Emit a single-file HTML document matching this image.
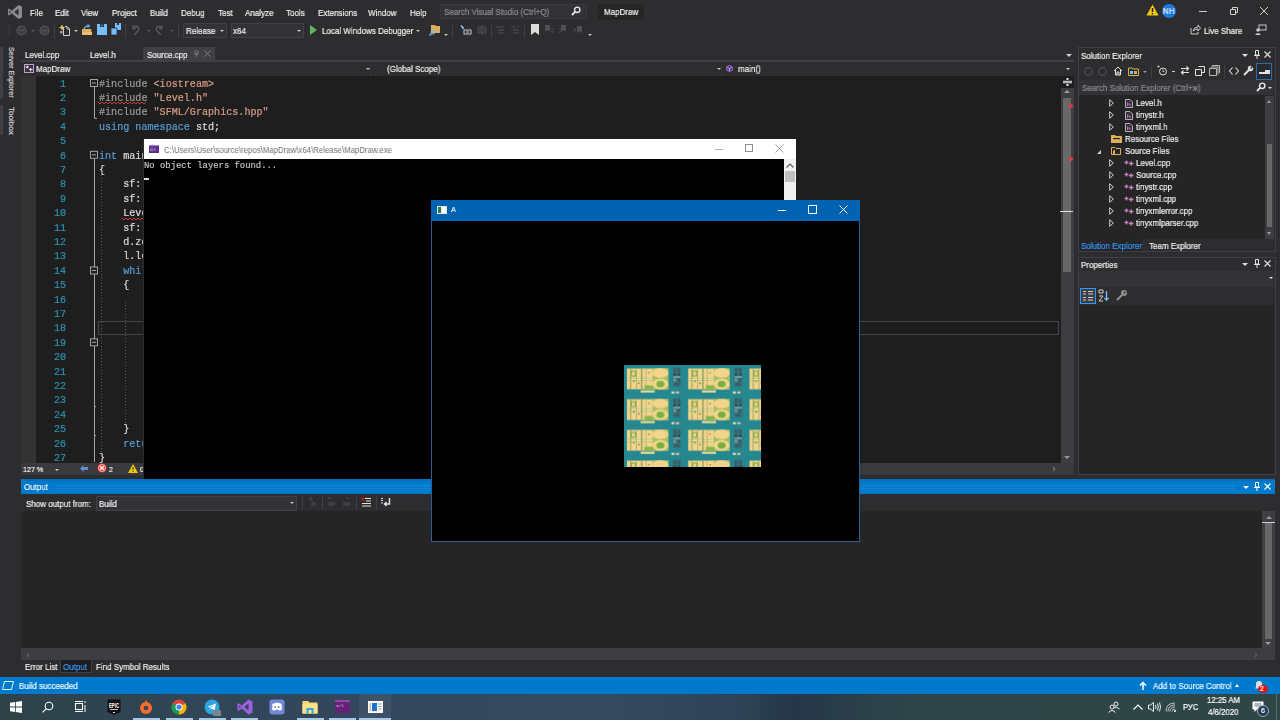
<!DOCTYPE html>
<html><head><meta charset="utf-8">
<style>
*{margin:0;padding:0;box-sizing:border-box}
html,body{width:1280px;height:720px;overflow:hidden;background:#2d2d30;font-family:"Liberation Sans",sans-serif;color:#f1f1f1}
.a{position:absolute}
.t{position:absolute;white-space:nowrap;font-size:9px;line-height:10px;color:#f1f1f1;transform-origin:0 50%;transform:scaleX(.89)}
.mono{font-family:"Liberation Mono",monospace}
body{-webkit-font-smoothing:antialiased}
.t,.mono{will-change:transform}
.t{-webkit-text-stroke:0.2px}
.mono{-webkit-text-stroke:0.2px}
</style></head><body>
<!-- MENU BAR -->
<div class="a" style="left:0;top:0;width:1280px;height:47px;background:#2d2d30"></div>
<svg class="a" style="left:7px;top:4px" width="16" height="16" viewBox="0 0 16 16"><path d="M11.5 1 L15 2.6 V13.4 L11.5 15 L4.8 9.2 L2 11.4 L1 10.8 V5.2 L2 4.6 L4.8 6.8 Z M11.5 4.6 L7.2 8 L11.5 11.4 Z M2.2 6.6 V9.4 L3.9 8 Z" fill="#8b8b8f" fill-rule="evenodd"/></svg>
<div class="t" style="left:30px;top:7.5px">File</div>
<div class="t" style="left:55px;top:7.5px">Edit</div>
<div class="t" style="left:81px;top:7.5px">View</div>
<div class="t" style="left:112px;top:7.5px">Project</div>
<div class="t" style="left:150px;top:7.5px">Build</div>
<div class="t" style="left:181px;top:7.5px">Debug</div>
<div class="t" style="left:218px;top:7.5px">Test</div>
<div class="t" style="left:245px;top:7.5px">Analyze</div>
<div class="t" style="left:286px;top:7.5px">Tools</div>
<div class="t" style="left:318px;top:7.5px">Extensions</div>
<div class="t" style="left:368px;top:7.5px">Window</div>
<div class="t" style="left:410px;top:7.5px">Help</div>
<div class="a" style="left:440px;top:4px;width:147px;height:15px;background:#333337;border:1px solid #3a3a3e"></div>
<div class="t" style="left:444px;top:6.5px;color:#8e8e8e">Search Visual Studio (Ctrl+Q)</div>
<svg class="a" style="left:571px;top:6px" width="10" height="10" viewBox="0 0 10 10"><circle cx="6.2" cy="3.8" r="2.7" fill="none" stroke="#e8e8e8" stroke-width="1.4"/><path d="M4.3 5.7 L1 9" stroke="#e8e8e8" stroke-width="1.8"/></svg>
<div class="a" style="left:598px;top:4px;width:46px;height:16px;background:#252526"></div>
<div class="t" style="left:604px;top:6.5px">MapDraw</div>
<!-- right title controls -->
<svg class="a" style="left:1146px;top:4px" width="13" height="12" viewBox="0 0 13 12"><path d="M6.5 0.5 L12.5 11.5 H0.5 Z" fill="#f2c811"/><path d="M6.5 4 V8" stroke="#1e1e1e" stroke-width="1.4"/><rect x="5.8" y="9" width="1.4" height="1.4" fill="#1e1e1e"/></svg>
<div class="a" style="left:1162px;top:4px;width:14px;height:14px;border-radius:50%;background:#1a7ae0"></div>
<div class="t" style="left:1163px;top:6px;font-size:8.5px;letter-spacing:0.6px">NH</div>
<div class="a" style="left:1199px;top:11px;width:8px;height:1px;background:#d0d0d0"></div>
<svg class="a" style="left:1229px;top:6px" width="10" height="10" viewBox="0 0 10 10"><path d="M1.5 3.5 H6.5 V8.5 H1.5 Z M3.5 3.5 V1.5 H8.5 V6.5 H6.5" fill="none" stroke="#d0d0d0" stroke-width="1"/></svg>
<svg class="a" style="left:1259px;top:6px" width="10" height="10" viewBox="0 0 10 10"><path d="M1 1 L9 9 M9 1 L1 9" stroke="#d0d0d0" stroke-width="1"/></svg>

<!-- TOOLBAR -->
<div class="a" style="left:8px;top:24px;width:2px;height:13px;background-image:linear-gradient(#3a3a3e 50%,transparent 50%);background-size:2px 2px"></div>
<svg class="a" style="left:16px;top:25px" width="11" height="11" viewBox="0 0 11 11"><circle cx="5.5" cy="5.5" r="4.5" fill="#3e3e42" stroke="#55555a" stroke-width="1.2"/><path d="M3 5.5 H8" fill="none" stroke="#55555a" stroke-width="1.4"/></svg>
<div class="a" style="left:31px;top:30px;width:0;height:0;border-left:2px solid transparent;border-right:2px solid transparent;border-top:2px solid #5a5a5e"></div>
<svg class="a" style="left:39px;top:25px" width="11" height="11" viewBox="0 0 11 11"><circle cx="5.5" cy="5.5" r="4.5" fill="#3e3e42" stroke="#55555a" stroke-width="1.2"/><path d="M3 5.5 H8" fill="none" stroke="#55555a" stroke-width="1.4"/></svg>
<div class="a" style="left:54px;top:24px;width:1px;height:14px;background:#3f3f46"></div>
<svg class="a" style="left:59px;top:24px" width="12" height="12" viewBox="0 0 12 12"><path d="M4.5 3.5 V11.5 H10.5 V5 L8 2.5 H6" fill="none" stroke="#d0d0d0" stroke-width="1"/><path d="M8 2.5 V5 H10.5" fill="none" stroke="#d0d0d0" stroke-width="0.8"/><path d="M3 0.5 L4 2.5 L6 3.5 L4 4.5 L3 6.5 L2 4.5 L0 3.5 L2 2.5 Z" fill="#e0c060"/><rect x="1" y="7" width="2.5" height="2.5" fill="#a0a0a0"/></svg>
<div class="a" style="left:74px;top:30px;width:0;height:0;border-left:2px solid transparent;border-right:2px solid transparent;border-top:2px solid #c8c8c8"></div>
<svg class="a" style="left:81px;top:24px" width="12" height="12" viewBox="0 0 12 12"><path d="M1 5 H10 L11 11 H1 Z" fill="#dcb05a"/><path d="M1 8 H11 V11 H1Z" fill="#e8c070"/><path d="M3 5 Q4 1.5 8 2 M6.5 0.5 L8.5 2 L6.5 3.5" fill="none" stroke="#60a8e8" stroke-width="1.2"/></svg>
<svg class="a" style="left:97px;top:24px" width="10" height="11" viewBox="0 0 10 11"><path d="M0 0 H10 V11 H0 Z" fill="#75beff"/><path d="M3 0 H7 V3 H3Z" fill="#2d2d30"/><rect x="4.5" y="0.5" width="1" height="2" fill="#75beff"/></svg>
<svg class="a" style="left:111px;top:23px" width="10" height="12" viewBox="0 0 10 12"><path d="M4 0 H10 V7 H4Z" fill="#75beff"/><path d="M0 5 H6 V12 H0Z" fill="#75beff" stroke="#2d2d30" stroke-width="0.8"/><rect x="6" y="0" width="2" height="2" fill="#2d2d30"/></svg>
<div class="a" style="left:125px;top:24px;width:1px;height:14px;background:#3f3f46"></div>
<svg class="a" style="left:131px;top:25px" width="10" height="11" viewBox="0 0 10 11"><path d="M3 10 L7 6 Q9 3 6 1.5 Q3.5 0.5 2 3 M2 0.5 V3.5 H5" fill="none" stroke="#5a5a5e" stroke-width="1.4"/></svg>
<div class="a" style="left:147px;top:30px;width:0;height:0;border-left:2px solid transparent;border-right:2px solid transparent;border-top:2px solid #5a5a5e"></div>
<svg class="a" style="left:154px;top:25px" width="10" height="11" viewBox="0 0 10 11"><path d="M7 10 L3 6 Q1 3 4 1.5 Q6.5 0.5 8 3 M8 0.5 V3.5 H5" fill="none" stroke="#5a5a5e" stroke-width="1.4"/></svg>
<div class="a" style="left:170px;top:30px;width:0;height:0;border-left:2px solid transparent;border-right:2px solid transparent;border-top:2px solid #5a5a5e"></div>
<div class="a" style="left:178px;top:24px;width:1px;height:14px;background:#3f3f46"></div>
<div class="a" style="left:183px;top:23px;width:44px;height:15px;background:#333337;border:1px solid #3f3f46"></div>
<div class="t" style="left:186px;top:26px">Release</div>
<div class="a" style="left:220px;top:30px;width:0;height:0;border-left:2.5px solid transparent;border-right:2.5px solid transparent;border-top:2.5px solid #c8c8c8"></div>
<div class="a" style="left:231px;top:23px;width:73px;height:15px;background:#333337;border:1px solid #3f3f46"></div>
<div class="t" style="left:233px;top:26px">x64</div>
<div class="a" style="left:297px;top:30px;width:0;height:0;border-left:2.5px solid transparent;border-right:2.5px solid transparent;border-top:2.5px solid #c8c8c8"></div>
<div class="a" style="left:310px;top:25px;width:0;height:0;border-top:5px solid transparent;border-bottom:5px solid transparent;border-left:7px solid #5fb85f"></div>
<div class="t" style="left:322px;top:26px">Local Windows Debugger</div>
<div class="a" style="left:416px;top:30px;width:0;height:0;border-left:2.5px solid transparent;border-right:2.5px solid transparent;border-top:2.5px solid #c8c8c8"></div>
<svg class="a" style="left:429px;top:24px" width="12" height="12" viewBox="0 0 12 12"><path d="M2 1 H6 L7 2 H11 V9 H2Z" fill="#dcb05a"/><circle cx="4" cy="8" r="2" fill="none" stroke="#75beff" stroke-width="1"/><path d="M2.5 9.5 L0.5 11.5" stroke="#75beff" stroke-width="1.2"/></svg>
<div class="a" style="left:444px;top:34px;width:0;height:0;border-left:2px solid transparent;border-right:2px solid transparent;border-top:2px solid #c8c8c8"></div>
<div class="a" style="left:452px;top:24px;width:1px;height:14px;background:#3f3f46"></div>
<svg class="a" style="left:460px;top:24px" width="12" height="12" viewBox="0 0 12 12"><rect x="4" y="6" width="7" height="4" fill="none" stroke="#c8c8c8" stroke-width="1"/><path d="M1 1 L4 4 L2.5 4.5Z" fill="#75beff" stroke="#75beff"/><path d="M6 8 H9" stroke="#c8c8c8"/></svg>
<svg class="a" style="left:476px;top:24px" width="12" height="12" viewBox="0 0 12 12"><path d="M6 1 V11 M2 3 H10 V9 H2Z M3 5 H5 M7 5 H9 M3 7 H5 M7 7 H9" fill="none" stroke="#505054" stroke-width="1"/></svg>
<div class="a" style="left:491px;top:24px;width:1px;height:14px;background:#3f3f46"></div>
<svg class="a" style="left:495px;top:25px" width="10" height="10" viewBox="0 0 10 10"><path d="M1 2 H9 M3 5 H9 M3 8 H9" stroke="#505054" stroke-width="1.2"/></svg>
<svg class="a" style="left:510px;top:25px" width="10" height="10" viewBox="0 0 10 10"><path d="M1 2 H6 M3 5 H9 M3 8 H9 M8 1 L9 2" stroke="#505054" stroke-width="1.2"/></svg>
<div class="a" style="left:524px;top:24px;width:1px;height:14px;background:#3f3f46"></div>
<svg class="a" style="left:531px;top:24px" width="8" height="11" viewBox="0 0 8 11"><path d="M0 0 H8 V11 L4 8 L0 11Z" fill="#dcdcdc"/></svg>
<svg class="a" style="left:545px;top:25px" width="9" height="10" viewBox="0 0 9 10"><path d="M0 0 H5 V7 L2.5 5 L0 7Z" fill="#505054"/><path d="M6 4 H9 M6 7 H9" stroke="#505054"/></svg>
<svg class="a" style="left:559px;top:25px" width="9" height="10" viewBox="0 0 9 10"><path d="M2 0 H7 V7 L4.5 5 L2 7Z" fill="#505054"/><path d="M0 4 H2 M0 7 H2" stroke="#505054"/></svg>
<svg class="a" style="left:573px;top:25px" width="10" height="10" viewBox="0 0 10 10"><path d="M4 1 H9 V8 L6.5 6 L4 8Z" fill="#505054"/><path d="M0 3 L3 5 L0 7" fill="none" stroke="#505054"/></svg>
<div class="a" style="left:588px;top:34px;width:0;height:0;border-left:2px solid transparent;border-right:2px solid transparent;border-top:2px solid #c8c8c8"></div>
<svg class="a" style="left:1190px;top:24px" width="11" height="11" viewBox="0 0 11 11"><path d="M1 4 V10 H8 V8 M3 7 Q4 3 8 3 V1 L10.5 4 L8 7 V5 Q5 5 3 7" fill="none" stroke="#c8c8c8" stroke-width="1"/></svg>
<div class="t" style="left:1204px;top:26px">Live Share</div>
<svg class="a" style="left:1255px;top:24px" width="12" height="12" viewBox="0 0 12 12"><rect x="4" y="1" width="7" height="5" fill="none" stroke="#c8c8c8"/><circle cx="3" cy="6" r="1.8" fill="#c8c8c8"/><path d="M0 11 Q3 7 6 11Z" fill="#c8c8c8"/></svg>

<!-- LEFT STRIP -->
<div class="a" style="left:0;top:47px;width:3px;height:52px;background:#3f3f46"></div>
<div class="a" style="left:0;top:105px;width:3px;height:30px;background:#3f3f46"></div>
<div class="t" style="left:3px;top:47px;transform-origin:0 0;transform:translate(12.5px,0) rotate(90deg);will-change:auto;font-size:7.3px;color:#d0d0d0">Server Explorer</div>
<div class="t" style="left:3px;top:106.5px;transform-origin:0 0;transform:translate(12.5px,0) rotate(90deg);will-change:auto;font-size:8.1px;color:#d0d0d0">Toolbox</div>
<!-- TABS -->
<div class="t" style="left:25px;top:50px">Level.cpp</div>
<div class="t" style="left:90px;top:50px">Level.h</div>
<div class="a" style="left:143px;top:47px;width:72px;height:14px;background:#3f3f46"></div>
<div class="t" style="left:147px;top:50px">Source.cpp</div>
<svg class="a" style="left:193px;top:50px" width="7" height="7" viewBox="0 0 7 7"><path d="M2 1 H5 V4 H2Z M1 4 H6 M3.5 4 V7" fill="none" stroke="#808080" stroke-width="0.8"/></svg>
<svg class="a" style="left:204px;top:50px" width="7" height="7" viewBox="0 0 7 7"><path d="M0.5 0.5 L6.5 6.5 M6.5 0.5 L0.5 6.5" stroke="#808080" stroke-width="1"/></svg>
<div class="a" style="left:21px;top:60px;width:1053px;height:2px;background:#3f3f46"></div>
<div class="a" style="left:1066px;top:54px;width:0;height:0;border-left:3px solid transparent;border-right:3px solid transparent;border-top:3px solid #d0d0d0"></div>
<!-- NAV BAR -->
<div class="a" style="left:21px;top:62px;width:1053px;height:14px;background:#2d2d30"></div>
<svg class="a" style="left:24px;top:64px" width="10" height="9" viewBox="0 0 10 9"><rect x="0.5" y="0.5" width="9" height="8" fill="#3a2e40" stroke="#c0a0d0"/><path d="M1.5 3 H5 M3.2 1.5 V4.5 M5 5.5 H8.5 M6.7 4 V7.5" stroke="#f0f0f0" fill="none" stroke-width="1"/></svg>
<div class="t" style="left:36px;top:64px">MapDraw</div>
<div class="a" style="left:366px;top:68px;width:0;height:0;border-left:2px solid transparent;border-right:2px solid transparent;border-top:2px solid #c8c8c8"></div>
<div class="a" style="left:370px;top:62px;width:1px;height:14px;background:#38383c"></div>
<div class="t" style="left:387px;top:64px">(Global Scope)</div>
<div class="a" style="left:717px;top:68px;width:0;height:0;border-left:2px solid transparent;border-right:2px solid transparent;border-top:2px solid #c8c8c8"></div>
<div class="a" style="left:721px;top:62px;width:1px;height:14px;background:#38383c"></div>
<svg class="a" style="left:726px;top:64.5px" width="7" height="7" viewBox="0 0 7 7"><path d="M3.5 0.3 L6.7 2 V5 L3.5 6.7 L0.3 5 V2Z" fill="#5a2d8a" stroke="#b180d7" stroke-width="0.8"/><path d="M1.5 2.5 L3.5 3.5 L5.5 2.5 M3.5 3.5 V6" fill="none" stroke="#d8c0f0" stroke-width="0.8"/></svg>
<div class="t" style="left:738px;top:64px">main()</div>
<div class="a" style="left:1066px;top:68px;width:0;height:0;border-left:2px solid transparent;border-right:2px solid transparent;border-top:2px solid #c8c8c8"></div>
<!-- EDITOR -->
<div class="a" style="left:21px;top:76px;width:15px;height:387px;background:#333333"></div>
<div class="a" style="left:36px;top:76px;width:1025px;height:387px;background:#1e1e1e"></div>
<div class="a" style="left:98px;top:321px;width:961px;height:14px;border:1px solid #46464a"></div>
<div class="a mono" style="left:36px;top:77.5px;width:30px;text-align:right;font-size:10.1px;line-height:14px;color:#2b91af">1</div>
<div class="a mono" style="left:36px;top:91.9px;width:30px;text-align:right;font-size:10.1px;line-height:14px;color:#2b91af">2</div>
<div class="a mono" style="left:36px;top:106.3px;width:30px;text-align:right;font-size:10.1px;line-height:14px;color:#2b91af">3</div>
<div class="a mono" style="left:36px;top:120.7px;width:30px;text-align:right;font-size:10.1px;line-height:14px;color:#2b91af">4</div>
<div class="a mono" style="left:36px;top:135.1px;width:30px;text-align:right;font-size:10.1px;line-height:14px;color:#2b91af">5</div>
<div class="a mono" style="left:36px;top:149.5px;width:30px;text-align:right;font-size:10.1px;line-height:14px;color:#2b91af">6</div>
<div class="a mono" style="left:36px;top:163.9px;width:30px;text-align:right;font-size:10.1px;line-height:14px;color:#2b91af">7</div>
<div class="a mono" style="left:36px;top:178.3px;width:30px;text-align:right;font-size:10.1px;line-height:14px;color:#2b91af">8</div>
<div class="a mono" style="left:36px;top:192.7px;width:30px;text-align:right;font-size:10.1px;line-height:14px;color:#2b91af">9</div>
<div class="a mono" style="left:36px;top:207.1px;width:30px;text-align:right;font-size:10.1px;line-height:14px;color:#2b91af">10</div>
<div class="a mono" style="left:36px;top:221.5px;width:30px;text-align:right;font-size:10.1px;line-height:14px;color:#2b91af">11</div>
<div class="a mono" style="left:36px;top:235.9px;width:30px;text-align:right;font-size:10.1px;line-height:14px;color:#2b91af">12</div>
<div class="a mono" style="left:36px;top:250.3px;width:30px;text-align:right;font-size:10.1px;line-height:14px;color:#2b91af">13</div>
<div class="a mono" style="left:36px;top:264.7px;width:30px;text-align:right;font-size:10.1px;line-height:14px;color:#2b91af">14</div>
<div class="a mono" style="left:36px;top:279.1px;width:30px;text-align:right;font-size:10.1px;line-height:14px;color:#2b91af">15</div>
<div class="a mono" style="left:36px;top:293.5px;width:30px;text-align:right;font-size:10.1px;line-height:14px;color:#2b91af">16</div>
<div class="a mono" style="left:36px;top:307.9px;width:30px;text-align:right;font-size:10.1px;line-height:14px;color:#2b91af">17</div>
<div class="a mono" style="left:36px;top:322.3px;width:30px;text-align:right;font-size:10.1px;line-height:14px;color:#2b91af">18</div>
<div class="a mono" style="left:36px;top:336.7px;width:30px;text-align:right;font-size:10.1px;line-height:14px;color:#2b91af">19</div>
<div class="a mono" style="left:36px;top:351.1px;width:30px;text-align:right;font-size:10.1px;line-height:14px;color:#2b91af">20</div>
<div class="a mono" style="left:36px;top:365.5px;width:30px;text-align:right;font-size:10.1px;line-height:14px;color:#2b91af">21</div>
<div class="a mono" style="left:36px;top:379.9px;width:30px;text-align:right;font-size:10.1px;line-height:14px;color:#2b91af">22</div>
<div class="a mono" style="left:36px;top:394.3px;width:30px;text-align:right;font-size:10.1px;line-height:14px;color:#2b91af">23</div>
<div class="a mono" style="left:36px;top:408.7px;width:30px;text-align:right;font-size:10.1px;line-height:14px;color:#2b91af">24</div>
<div class="a mono" style="left:36px;top:423.1px;width:30px;text-align:right;font-size:10.1px;line-height:14px;color:#2b91af">25</div>
<div class="a mono" style="left:36px;top:437.5px;width:30px;text-align:right;font-size:10.1px;line-height:14px;color:#2b91af">26</div>
<div class="a mono" style="left:36px;top:451.9px;width:30px;text-align:right;font-size:10.1px;line-height:14px;color:#2b91af">27</div>
<div class="a mono" style="left:98.5px;top:77.5px;white-space:pre;font-size:10.1px;line-height:14px;color:#dcdcdc"><span style="color:#9b9b9b">#include</span> <span style="color:#d69d85">&lt;iostream&gt;</span></div>
<div class="a mono" style="left:98.5px;top:91.9px;white-space:pre;font-size:10.1px;line-height:14px;color:#dcdcdc"><span style="color:#9b9b9b">#include</span> <span style="color:#d69d85">"Level.h"</span></div>
<div class="a mono" style="left:98.5px;top:106.3px;white-space:pre;font-size:10.1px;line-height:14px;color:#dcdcdc"><span style="color:#9b9b9b">#include</span> <span style="color:#d69d85">"SFML/Graphics.hpp"</span></div>
<div class="a mono" style="left:98.5px;top:120.7px;white-space:pre;font-size:10.1px;line-height:14px;color:#dcdcdc"><span style="color:#569cd6">using</span> <span style="color:#569cd6">namespace</span> std;</div>
<div class="a mono" style="left:98.5px;top:149.5px;white-space:pre;font-size:10.1px;line-height:14px;color:#dcdcdc"><span style="color:#569cd6">int</span> main()</div>
<div class="a mono" style="left:98.5px;top:163.9px;white-space:pre;font-size:10.1px;line-height:14px;color:#dcdcdc">{</div>
<div class="a mono" style="left:98.5px;top:178.3px;white-space:pre;font-size:10.1px;line-height:14px;color:#dcdcdc">    sf::RenderWindow</div>
<div class="a mono" style="left:98.5px;top:192.7px;white-space:pre;font-size:10.1px;line-height:14px;color:#dcdcdc">    sf::View</div>
<div class="a mono" style="left:98.5px;top:207.1px;white-space:pre;font-size:10.1px;line-height:14px;color:#dcdcdc">    Level</div>
<div class="a mono" style="left:98.5px;top:221.5px;white-space:pre;font-size:10.1px;line-height:14px;color:#dcdcdc">    sf::Texture</div>
<div class="a mono" style="left:98.5px;top:235.9px;white-space:pre;font-size:10.1px;line-height:14px;color:#dcdcdc">    d.zoom</div>
<div class="a mono" style="left:98.5px;top:250.3px;white-space:pre;font-size:10.1px;line-height:14px;color:#dcdcdc">    l.load</div>
<div class="a mono" style="left:98.5px;top:264.7px;white-space:pre;font-size:10.1px;line-height:14px;color:#dcdcdc">    <span style="color:#569cd6">while</span></div>
<div class="a mono" style="left:98.5px;top:279.1px;white-space:pre;font-size:10.1px;line-height:14px;color:#dcdcdc">    {</div>
<div class="a mono" style="left:98.5px;top:423.1px;white-space:pre;font-size:10.1px;line-height:14px;color:#dcdcdc">    }</div>
<div class="a mono" style="left:98.5px;top:437.5px;white-space:pre;font-size:10.1px;line-height:14px;color:#dcdcdc">    <span style="color:#569cd6">return</span></div>
<div class="a mono" style="left:98.5px;top:451.9px;white-space:pre;font-size:10.1px;line-height:14px;color:#dcdcdc">}</div>

<!-- outlining -->
<svg class="a" style="left:88px;top:77px" width="12" height="386" viewBox="0 0 12 387">
<g fill="none" stroke="#a5a5a5" stroke-width="1">
<rect x="2.5" y="2.5" width="7" height="7" fill="#1e1e1e"/><path d="M4 6 H8"/>
<path d="M6.5 10 V41.5 H9"/>
<rect x="2.5" y="74.5" width="7" height="7" fill="#1e1e1e"/><path d="M4 78 H8"/>
<path d="M6.5 82 V386"/>
<rect x="2.5" y="190.5" width="7" height="7" fill="#1e1e1e"/><path d="M4 194 H8"/>
<rect x="2.5" y="262.5" width="7" height="7" fill="#1e1e1e"/><path d="M4 266 H8"/>
<path d="M6.5 330.5 H8 M6.5 359.5 H8"/>
</g></svg>
<div class="a" style="left:101px;top:172px;width:1px;height:281px;background-image:linear-gradient(#5a5a5a 50%,transparent 50%);background-size:1px 3px"></div>
<div class="a" style="left:125px;top:302px;width:1px;height:122px;background-image:linear-gradient(#5a5a5a 50%,transparent 50%);background-size:1px 3px"></div>
<svg class="a" style="left:98px;top:101px" width="48" height="4" viewBox="0 0 48 4"><path d="M0 1 L2 3 L4 1 L6 3 L8 1 L10 3 L12 1 L14 3 L16 1 L18 3 L20 1 L22 3 L24 1 L26 3 L28 1 L30 3 L32 1 L34 3 L36 1 L38 3 L40 1 L42 3 L44 1 L46 3 L48 1" fill="none" stroke="#e04040" stroke-width="0.9"/></svg>
<svg class="a" style="left:122px;top:217px" width="24" height="4" viewBox="0 0 24 4"><path d="M0 1 L2 3 L4 1 L6 3 L8 1 L10 3 L12 1 L14 3 L16 1 L18 3 L20 1 L22 3 L24 1" fill="none" stroke="#e04040" stroke-width="0.9"/></svg>
<!-- editor scrollbar -->
<div class="a" style="left:1061px;top:76px;width:13px;height:387px;background:#3e3e42"></div>
<div class="a" style="left:1061px;top:76px;width:13px;height:12px;background:#1e1e1e"></div>
<svg class="a" style="left:1062px;top:77px" width="11" height="10" viewBox="0 0 11 10"><path d="M1 4.3 H10 M1 5.8 H10" stroke="#e8e8e8" stroke-width="1"/><rect x="4.5" y="1" width="2" height="2" fill="#e8e8e8"/><rect x="4.5" y="7" width="2" height="2" fill="#e8e8e8"/></svg>
<div class="a" style="left:1064px;top:90px;width:0;height:0;border-left:3px solid transparent;border-right:3px solid transparent;border-bottom:3px solid #999"></div>
<div class="a" style="left:1063px;top:98px;width:8px;height:174px;background:#686868"></div>
<div class="a" style="left:1069px;top:103.5px;width:4px;height:4px;border-radius:50%;background:#f0303a"></div>
<div class="a" style="left:1069px;top:156.5px;width:4px;height:4px;border-radius:50%;background:#f0303a"></div>
<div class="a" style="left:1060px;top:211px;width:13px;height:1px;background:#e0e0e0"></div>
<div class="a" style="left:1064px;top:456px;width:0;height:0;border-left:3px solid transparent;border-right:3px solid transparent;border-top:3px solid #999"></div>
<!-- editor bottom bar -->
<div class="a" style="left:21px;top:463px;width:1053px;height:12px;background:#3a3a3e"></div>

<div class="t" style="left:22.5px;top:464.5px;font-size:8px">127 %</div>
<div class="a" style="left:55px;top:469px;width:0;height:0;border-left:2px solid transparent;border-right:2px solid transparent;border-top:2px solid #d0d0d0"></div>
<svg class="a" style="left:80px;top:465px" width="8" height="7" viewBox="0 0 8 7"><path d="M0 3.5 L3.5 0 V2 H8 V5 H3.5 V7Z" fill="#5f8fc8"/></svg>
<svg class="a" style="left:97px;top:463px" width="10" height="10" viewBox="0 0 10 10"><circle cx="5" cy="5" r="4.5" fill="#e8352f"/><circle cx="5" cy="5" r="3.5" fill="none" stroke="#fff" stroke-width="0.6"/><path d="M3.2 3.2 L6.8 6.8 M6.8 3.2 L3.2 6.8" stroke="#fff" stroke-width="1.3"/></svg>
<div class="t" style="left:109px;top:465px;font-size:7.5px">2</div>
<svg class="a" style="left:128px;top:464px" width="10" height="9" viewBox="0 0 10 9"><path d="M5 0 L10 9 H0Z" fill="#f2c811"/><path d="M5 3 V6" stroke="#222" stroke-width="1"/><rect x="4.5" y="7" width="1" height="1" fill="#222"/></svg>
<div class="t" style="left:140px;top:465px;font-size:7.5px">0</div>
<div class="a" style="left:1053px;top:466px;width:0;height:0;border-top:3px solid transparent;border-bottom:3px solid transparent;border-left:3px solid #666"></div>

<!-- SOLUTION EXPLORER -->
<div class="a" style="left:1078px;top:47px;width:198px;height:205px;border:1px solid #3f3f46;background:#2d2d30"></div>
<div class="t" style="left:1081px;top:50.5px">Solution Explorer</div>
<div class="a" style="left:1242px;top:54px;width:0;height:0;border-left:3px solid transparent;border-right:3px solid transparent;border-top:3px solid #e0e0e0"></div>
<svg class="a" style="left:1254px;top:50px" width="6" height="9" viewBox="0 0 6 9"><path d="M1.5 0.5 H4.5 V5 H1.5Z M0 5.5 H6 M3 5.5 V9" fill="none" stroke="#e0e0e0" stroke-width="1"/></svg>
<svg class="a" style="left:1264px;top:51px" width="7" height="7" viewBox="0 0 7 7"><path d="M0.5 0.5 L6.5 6.5 M6.5 0.5 L0.5 6.5" stroke="#e0e0e0" stroke-width="1.1"/></svg>
<!-- toolbar -->
<svg class="a" style="left:1084px;top:67px" width="9" height="9" viewBox="0 0 9 9"><circle cx="4.5" cy="4.5" r="3.8" fill="none" stroke="#505054" stroke-width="1.2"/></svg>
<svg class="a" style="left:1098px;top:67px" width="9" height="9" viewBox="0 0 9 9"><circle cx="4.5" cy="4.5" r="3.8" fill="none" stroke="#505054" stroke-width="1.2"/></svg>
<svg class="a" style="left:1113px;top:66px" width="10" height="10" viewBox="0 0 10 10"><path d="M1 5 L5 1 L9 5 M2.5 4 V9 H7.5 V4 M4 9 V6 H6 V9" fill="none" stroke="#e0e0e0" stroke-width="1"/></svg>
<svg class="a" style="left:1128px;top:65px" width="11" height="11" viewBox="0 0 11 11"><path d="M0.5 3 H4 L5 4 H10.5 V10.5 H0.5Z" fill="none" stroke="#dcb05a" stroke-width="1"/><rect x="2" y="6" width="3" height="3" fill="#75beff"/><rect x="6" y="6" width="3" height="3" fill="#dcb05a"/></svg>
<div class="a" style="left:1143px;top:71px;width:0;height:0;border-left:2px solid transparent;border-right:2px solid transparent;border-top:2px solid #999"></div>
<div class="a" style="left:1151px;top:65px;width:1px;height:13px;background:#3f3f46"></div>
<svg class="a" style="left:1157px;top:65px" width="11" height="11" viewBox="0 0 11 11"><circle cx="6" cy="6.5" r="3.5" fill="none" stroke="#e0e0e0" stroke-width="1"/><path d="M6 4.5 V6.5 H7.5" stroke="#e0e0e0" fill="none" stroke-width="0.8"/><circle cx="1.5" cy="1.5" r="1" fill="#e0e0e0"/></svg>
<div class="a" style="left:1172px;top:71px;width:3px;height:1px;background:#c8c8c8"></div>
<svg class="a" style="left:1180px;top:65px" width="10" height="11" viewBox="0 0 10 11"><path d="M1 3.5 H8.5 M6.5 1.5 L8.5 3.5 L6.5 5.5 M9 7.5 H1.5 M3.5 5.5 L1.5 7.5 L3.5 9.5" fill="none" stroke="#e0e0e0" stroke-width="1.2"/></svg>
<svg class="a" style="left:1195px;top:66px" width="10" height="10" viewBox="0 0 10 10"><path d="M3.5 0.5 H9.5 V6.5 H7 M0.5 3.5 H6.5 V9.5 H0.5Z" fill="none" stroke="#e0e0e0" stroke-width="1"/></svg>
<svg class="a" style="left:1209px;top:65px" width="11" height="11" viewBox="0 0 11 11"><path d="M3 0.5 H10.5 V8 M1.5 2 H9 V9.5 M0.5 3.5 H7.5 V10.5 H0.5Z" fill="none" stroke="#c8c8c8" stroke-width="0.9"/></svg>
<div class="a" style="left:1224px;top:65px;width:1px;height:13px;background:#3f3f46"></div>
<svg class="a" style="left:1229px;top:67px" width="10" height="8" viewBox="0 0 10 8"><path d="M3.5 0.5 L0.5 4 L3.5 7.5 M6.5 0.5 L9.5 4 L6.5 7.5" fill="none" stroke="#e0e0e0" stroke-width="1.1"/></svg>
<svg class="a" style="left:1243px;top:65px" width="11" height="11" viewBox="0 0 11 11"><path d="M1 10 L6 5" stroke="#e0e0e0" stroke-width="2"/><circle cx="7.5" cy="3.5" r="2.7" fill="#e0e0e0"/><path d="M7.5 3.5 L10 1" stroke="#2d2d30" stroke-width="1.4"/></svg>
<div class="a" style="left:1256px;top:63px;width:16px;height:17px;border:1px solid #2f6ba8;background:#262a30"></div>
<div class="a" style="left:1259px;top:72px;width:11px;height:2px;background:#e0e0e0"></div>
<div class="a" style="left:1265px;top:70px;width:5px;height:2px;background:#e0e0e0"></div>
<!-- search -->
<div class="a" style="left:1079px;top:80px;width:195px;height:15px;background:#333337"></div>
<div class="t" style="left:1082px;top:83px;color:#8e8e8e">Search Solution Explorer (Ctrl+ж)</div>
<svg class="a" style="left:1256px;top:82px" width="10" height="10" viewBox="0 0 10 10"><circle cx="6.2" cy="3.8" r="2.7" fill="none" stroke="#e8e8e8" stroke-width="1.4"/><path d="M4.3 5.7 L1 9" stroke="#e8e8e8" stroke-width="1.8"/></svg>
<div class="a" style="left:1268px;top:87px;width:0;height:0;border-left:2px solid transparent;border-right:2px solid transparent;border-top:2px solid #e0e0e0"></div>
<!-- tree -->
<div class="a" style="left:1079px;top:95px;width:195px;height:144px;background:#252526"></div>
<svg class="a" style="left:1109px;top:98.6px" width="5" height="8" viewBox="0 0 5 8"><path d="M0.7 0.7 L4.3 4 L0.7 7.3Z" fill="none" stroke="#d0d0d0" stroke-width="1"/></svg>
<svg class="a" style="left:1125px;top:98.6px" width="8" height="9" viewBox="0 0 8 9"><path d="M0.5 0.5 H5 L7.5 3 V8.5 H0.5Z" fill="#3a3040" stroke="#b0b0b0" stroke-width="1"/><path d="M2.5 3.5 V7 M2.5 5 H5 V7" fill="none" stroke="#c586c0" stroke-width="0.8"/></svg>
<div class="t" style="left:1136px;top:98.1px">Level.h</div>
<svg class="a" style="left:1109px;top:110.6px" width="5" height="8" viewBox="0 0 5 8"><path d="M0.7 0.7 L4.3 4 L0.7 7.3Z" fill="none" stroke="#d0d0d0" stroke-width="1"/></svg>
<svg class="a" style="left:1125px;top:110.6px" width="8" height="9" viewBox="0 0 8 9"><path d="M0.5 0.5 H5 L7.5 3 V8.5 H0.5Z" fill="#3a3040" stroke="#b0b0b0" stroke-width="1"/><path d="M2.5 3.5 V7 M2.5 5 H5 V7" fill="none" stroke="#c586c0" stroke-width="0.8"/></svg>
<div class="t" style="left:1136px;top:110.1px">tinystr.h</div>
<svg class="a" style="left:1109px;top:122.6px" width="5" height="8" viewBox="0 0 5 8"><path d="M0.7 0.7 L4.3 4 L0.7 7.3Z" fill="none" stroke="#d0d0d0" stroke-width="1"/></svg>
<svg class="a" style="left:1125px;top:122.6px" width="8" height="9" viewBox="0 0 8 9"><path d="M0.5 0.5 H5 L7.5 3 V8.5 H0.5Z" fill="#3a3040" stroke="#b0b0b0" stroke-width="1"/><path d="M2.5 3.5 V7 M2.5 5 H5 V7" fill="none" stroke="#c586c0" stroke-width="0.8"/></svg>
<div class="t" style="left:1136px;top:122.1px">tinyxml.h</div>
<svg class="a" style="left:1111px;top:133.6px" width="11" height="9" viewBox="0 0 11 9"><path d="M0 1 H4 L5 2 H11 V9 H0Z" fill="#dcb05a"/><path d="M2 4 H9 V5.2 H2Z" fill="#252526"/></svg>
<div class="t" style="left:1124.5px;top:134.1px">Resource Files</div>
<div class="a" style="left:1097px;top:149.6px;width:0;height:0;border-left:4px solid transparent;border-bottom:4px solid #d0d0d0"></div>
<svg class="a" style="left:1111px;top:145.6px" width="11" height="9" viewBox="0 0 11 9"><path d="M0.5 8.5 V1.5 H4 L5 2.5 H9.5 V8.5Z" fill="none" stroke="#dcb05a" stroke-width="1"/><path d="M2 5 L4 3.5 V8 L2 8Z" fill="#dcb05a"/></svg>
<div class="t" style="left:1124.5px;top:146.1px">Source Files</div>
<svg class="a" style="left:1109px;top:158.6px" width="5" height="8" viewBox="0 0 5 8"><path d="M0.7 0.7 L4.3 4 L0.7 7.3Z" fill="none" stroke="#d0d0d0" stroke-width="1"/></svg>
<svg class="a" style="left:1124px;top:159.6px" width="10" height="6" viewBox="0 0 10 6"><path d="M0.5 2.5 H4.5 M2.5 0.5 V4.5 M5 3.5 H9.5 M7.2 1.3 V5.7" stroke="#c586c0" stroke-width="1.3"/></svg>
<div class="t" style="left:1136px;top:158.1px">Level.cpp</div>
<svg class="a" style="left:1109px;top:170.6px" width="5" height="8" viewBox="0 0 5 8"><path d="M0.7 0.7 L4.3 4 L0.7 7.3Z" fill="none" stroke="#d0d0d0" stroke-width="1"/></svg>
<svg class="a" style="left:1124px;top:171.6px" width="10" height="6" viewBox="0 0 10 6"><path d="M0.5 2.5 H4.5 M2.5 0.5 V4.5 M5 3.5 H9.5 M7.2 1.3 V5.7" stroke="#c586c0" stroke-width="1.3"/></svg>
<div class="t" style="left:1136px;top:170.1px">Source.cpp</div>
<svg class="a" style="left:1109px;top:182.6px" width="5" height="8" viewBox="0 0 5 8"><path d="M0.7 0.7 L4.3 4 L0.7 7.3Z" fill="none" stroke="#d0d0d0" stroke-width="1"/></svg>
<svg class="a" style="left:1124px;top:183.6px" width="10" height="6" viewBox="0 0 10 6"><path d="M0.5 2.5 H4.5 M2.5 0.5 V4.5 M5 3.5 H9.5 M7.2 1.3 V5.7" stroke="#c586c0" stroke-width="1.3"/></svg>
<div class="t" style="left:1136px;top:182.1px">tinystr.cpp</div>
<svg class="a" style="left:1109px;top:194.6px" width="5" height="8" viewBox="0 0 5 8"><path d="M0.7 0.7 L4.3 4 L0.7 7.3Z" fill="none" stroke="#d0d0d0" stroke-width="1"/></svg>
<svg class="a" style="left:1124px;top:195.6px" width="10" height="6" viewBox="0 0 10 6"><path d="M0.5 2.5 H4.5 M2.5 0.5 V4.5 M5 3.5 H9.5 M7.2 1.3 V5.7" stroke="#c586c0" stroke-width="1.3"/></svg>
<div class="t" style="left:1136px;top:194.1px">tinyxml.cpp</div>
<svg class="a" style="left:1109px;top:206.6px" width="5" height="8" viewBox="0 0 5 8"><path d="M0.7 0.7 L4.3 4 L0.7 7.3Z" fill="none" stroke="#d0d0d0" stroke-width="1"/></svg>
<svg class="a" style="left:1124px;top:207.6px" width="10" height="6" viewBox="0 0 10 6"><path d="M0.5 2.5 H4.5 M2.5 0.5 V4.5 M5 3.5 H9.5 M7.2 1.3 V5.7" stroke="#c586c0" stroke-width="1.3"/></svg>
<div class="t" style="left:1136px;top:206.1px">tinyxmlerror.cpp</div>
<svg class="a" style="left:1109px;top:218.6px" width="5" height="8" viewBox="0 0 5 8"><path d="M0.7 0.7 L4.3 4 L0.7 7.3Z" fill="none" stroke="#d0d0d0" stroke-width="1"/></svg>
<svg class="a" style="left:1124px;top:219.6px" width="10" height="6" viewBox="0 0 10 6"><path d="M0.5 2.5 H4.5 M2.5 0.5 V4.5 M5 3.5 H9.5 M7.2 1.3 V5.7" stroke="#c586c0" stroke-width="1.3"/></svg>
<div class="t" style="left:1136px;top:218.1px">tinyxmlparser.cpp</div>

<div class="a" style="left:1265px;top:96px;width:9px;height:143px;background:#3e3e42"></div>
<div class="a" style="left:1267px;top:100px;width:0;height:0;border-left:2.5px solid transparent;border-right:2.5px solid transparent;border-bottom:3px solid #999"></div>
<div class="a" style="left:1267px;top:144px;width:5px;height:83px;background:#686868"></div>
<div class="a" style="left:1267px;top:232px;width:0;height:0;border-left:2.5px solid transparent;border-right:2.5px solid transparent;border-top:3px solid #999"></div>
<!-- SE bottom tabs -->
<div class="a" style="left:1079px;top:239px;width:63px;height:12px;background:#252526"></div>
<div class="t" style="left:1081px;top:241px;color:#3399ff">Solution Explorer</div>
<div class="t" style="left:1149px;top:241px">Team Explorer</div>
<!-- PROPERTIES -->
<div class="a" style="left:1078px;top:257px;width:198px;height:218px;border:1px solid #3f3f46;background:#2d2d30"></div>
<div class="t" style="left:1081px;top:260px">Properties</div>
<div class="a" style="left:1242px;top:263px;width:0;height:0;border-left:3px solid transparent;border-right:3px solid transparent;border-top:3px solid #e0e0e0"></div>
<svg class="a" style="left:1254px;top:259px" width="6" height="9" viewBox="0 0 6 9"><path d="M1.5 0.5 H4.5 V5 H1.5Z M0 5.5 H6 M3 5.5 V9" fill="none" stroke="#e0e0e0" stroke-width="1"/></svg>
<svg class="a" style="left:1264px;top:260px" width="7" height="7" viewBox="0 0 7 7"><path d="M0.5 0.5 L6.5 6.5 M6.5 0.5 L0.5 6.5" stroke="#e0e0e0" stroke-width="1.1"/></svg>
<div class="a" style="left:1079px;top:271px;width:195px;height:16px;background:#333337"></div>
<div class="a" style="left:1269px;top:277px;width:0;height:0;border-left:2px solid transparent;border-right:2px solid transparent;border-top:2px solid #e0e0e0"></div>
<div class="a" style="left:1080px;top:288px;width:16px;height:16px;border:1px solid #3399ff;background:#3e3e42"></div>
<svg class="a" style="left:1082px;top:290px" width="12" height="12" viewBox="0 0 12 12"><path d="M1 1.5 H4 M1 4 H4 M1 7.5 H4 M1 10 H4 M6 1.5 H11 M6 4 H11 M6 7.5 H11 M6 10 H11" stroke="#d0d0d0" stroke-width="1.2"/></svg>
<svg class="a" style="left:1098px;top:289px" width="12" height="13" viewBox="0 0 12 13"><path d="M1 1 H5 V4 H1Z M1 7 H5 L1 12 H5" fill="none" stroke="#d0d0d0" stroke-width="1"/><path d="M8.5 2 V11 M6.5 9 L8.5 11 L10.5 9" fill="none" stroke="#75beff" stroke-width="1.3"/></svg>
<svg class="a" style="left:1116px;top:289px" width="12" height="12" viewBox="0 0 12 12"><path d="M1 11 L6 6" stroke="#909090" stroke-width="2"/><circle cx="8" cy="4" r="3" fill="#909090"/><circle cx="8.5" cy="3.5" r="1" fill="#2d2d30"/></svg>
<div class="a" style="left:1079px;top:305px;width:195px;height:169px;background:#252526"></div>

<!-- OUTPUT PANEL -->
<div class="a" style="left:21px;top:479px;width:1254px;height:15px;background:#007acc"></div><div class="a" style="left:21px;top:479px;width:1254px;height:2px;background:#0a6fb8"></div><div class="a" style="left:55px;top:484px;width:1180px;height:6px;background-image:radial-gradient(circle at 1.5px 1.5px,#2a95e0 0.9px,transparent 1.1px);background-size:3px 3px;opacity:.55"></div>
<div class="t" style="left:24px;top:482px">Output</div>
<div class="a" style="left:1243px;top:485.5px;width:0;height:0;border-left:3px solid transparent;border-right:3px solid transparent;border-top:3px solid #fff"></div>
<svg class="a" style="left:1254px;top:482px" width="6" height="9" viewBox="0 0 6 9"><path d="M1.5 0.5 H4.5 V5 H1.5Z M0 5.5 H6 M3 5.5 V9" fill="none" stroke="#fff" stroke-width="1"/></svg>
<svg class="a" style="left:1264px;top:483px" width="7" height="7" viewBox="0 0 7 7"><path d="M0.5 0.5 L6.5 6.5 M6.5 0.5 L0.5 6.5" stroke="#fff" stroke-width="1.1"/></svg>
<div class="a" style="left:21px;top:494px;width:1254px;height:17px;background:#2d2d30"></div>
<div class="t" style="left:26px;top:498.5px">Show output from:</div>
<div class="a" style="left:96px;top:496px;width:201px;height:15px;background:#333337;border:1px solid #3f3f46"></div>
<div class="t" style="left:99px;top:498.5px">Build</div>
<div class="a" style="left:290px;top:502px;width:0;height:0;border-left:2.5px solid transparent;border-right:2.5px solid transparent;border-top:2.5px solid #c8c8c8"></div>
<div class="a" style="left:302px;top:496px;width:1px;height:13px;background:#3f3f46"></div>
<svg class="a" style="left:308px;top:497px" width="9" height="10" viewBox="0 0 9 10"><path d="M1 1 H4 M2 3 H5 M3 6 H8 M3 8 H8" stroke="#505054" stroke-width="1.1"/></svg>
<div class="a" style="left:322px;top:496px;width:1px;height:13px;background:#3f3f46"></div>
<svg class="a" style="left:327px;top:497px" width="9" height="10" viewBox="0 0 9 10"><path d="M1 1 H4 M1 6 H8 M1 8 H8" stroke="#505054" stroke-width="1.1"/></svg>
<svg class="a" style="left:342px;top:497px" width="9" height="10" viewBox="0 0 9 10"><path d="M4 1 H7 M1 6 H8 M1 8 H8" stroke="#505054" stroke-width="1.1"/></svg>
<div class="a" style="left:356px;top:496px;width:1px;height:13px;background:#3f3f46"></div>
<svg class="a" style="left:361px;top:497px" width="10" height="11" viewBox="0 0 10 11"><path d="M4 1.5 H10 M5 4 H10 M1 6.5 H10 M1 9 H10" stroke="#e0e0e0" stroke-width="1.2"/><path d="M0.5 0.5 L3.5 4 M3.5 0.5 L0.5 4" stroke="#e51400" stroke-width="1.1"/></svg>
<div class="a" style="left:376px;top:496px;width:1px;height:13px;background:#3f3f46"></div>
<svg class="a" style="left:380px;top:497px" width="12" height="11" viewBox="0 0 12 11"><path d="M9.5 1 V7 H5 M6.5 5 L4.5 7 L6.5 9" fill="none" stroke="#e0e0e0" stroke-width="1.5"/><path d="M1 1.5 H3 M1 3.5 H3 M1 6 H3" stroke="#e0e0e0" stroke-width="1"/></svg>
<div class="a" style="left:21px;top:511px;width:1254px;height:137px;background:#252526"></div>
<div class="a" style="left:1262px;top:511px;width:13px;height:137px;background:#3e3e42"></div>
<div class="a" style="left:1265.5px;top:516px;width:0;height:0;border-left:3px solid transparent;border-right:3px solid transparent;border-bottom:3px solid #999"></div>
<div class="a" style="left:1262px;top:522px;width:13px;height:1px;background:#d0d0d0"></div>
<div class="a" style="left:1265px;top:523px;width:7px;height:116px;background:#686868"></div>
<div class="a" style="left:1265px;top:642px;width:0;height:0;border-left:3px solid transparent;border-right:3px solid transparent;border-top:3px solid #999"></div>
<div class="a" style="left:21px;top:648px;width:1254px;height:12px;background:#3e3e42"></div>
<div class="a" style="left:26px;top:652px;width:0;height:0;border-top:3px solid transparent;border-bottom:3px solid transparent;border-right:3px solid #555"></div>
<div class="a" style="left:1255px;top:652px;width:0;height:0;border-top:3px solid transparent;border-bottom:3px solid transparent;border-left:3px solid #555"></div>

<!-- bottom tabs -->
<div class="t" style="left:25px;top:662px">Error List</div>
<div class="a" style="left:60px;top:660px;width:32px;height:13px;background:#1e1e1e;border:1px solid #3f3f46;border-top:none"></div>
<div class="t" style="left:63px;top:662px;color:#3399ff">Output</div>
<div class="t" style="left:96px;top:662px">Find Symbol Results</div>
<!-- STATUS BAR -->
<div class="a" style="left:0;top:677px;width:1280px;height:17px;background:#007acc"></div>
<svg class="a" style="left:2px;top:681px" width="12" height="9" viewBox="0 0 12 9"><path d="M2.5 0.5 H11.5 L9.5 8.5 H0.5Z" fill="none" stroke="#e6f2fa" stroke-width="1"/></svg>
<div class="t" style="left:19px;top:681px;color:#f0f8ff">Build succeeded</div>
<svg class="a" style="left:1139px;top:681px" width="8" height="9" viewBox="0 0 8 9"><path d="M4 9 V1.5 M1 4.5 L4 1.5 L7 4.5" fill="none" stroke="#fff" stroke-width="1.5"/></svg>
<div class="t" style="left:1153px;top:681px;color:#f0f8ff">Add to Source Control</div>
<div class="a" style="left:1235px;top:684px;width:0;height:0;border-left:2.5px solid transparent;border-right:2.5px solid transparent;border-bottom:3px solid #fff"></div>
<svg class="a" style="left:1254px;top:680px" width="10" height="11" viewBox="0 0 10 11"><path d="M5 1 Q2 1 2 4 V7 L1 8.5 H9 L8 7 V4 Q8 1 5 1Z" fill="#e0e0e0"/></svg>
<div class="a" style="left:1258px;top:685px;width:10px;height:8px;border-radius:50%;background:#e51400"></div>
<div class="t" style="left:1259.5px;top:684px;font-size:7px;line-height:9px;color:#fff">2</div>
<!-- TASKBAR -->
<div class="a" style="left:0;top:694px;width:1280px;height:26px;background:linear-gradient(90deg,#2e4248 0%,#2f4450 8%,#32465a 20%,#354a60 47%,#2f4356 58%,#243648 62%,#2b3f4a 67%,#2f4548 72%,#2f4646 100%)"></div>

<svg class="a" style="left:10px;top:701px" width="12" height="12" viewBox="0 0 12 12"><path d="M0 1.7 L5 1 V5.6 H0Z M5.8 0.9 L12 0 V5.6 H5.8Z M0 6.4 H5 V11 L0 10.3Z M5.8 6.4 H12 V12 L5.8 11.1Z" fill="#fff"/></svg>
<svg class="a" style="left:42px;top:701px" width="12" height="12" viewBox="0 0 12 12"><circle cx="7" cy="5" r="3.8" fill="none" stroke="#fff" stroke-width="1.1"/><path d="M4.3 7.7 L0.7 11.3" stroke="#fff" stroke-width="1.2"/></svg>
<svg class="a" style="left:74px;top:700px" width="13" height="13" viewBox="0 0 13 13"><rect x="1.5" y="3.5" width="7" height="6" fill="none" stroke="#fff" stroke-width="1"/><path d="M1 1.5 H9 M1 11.5 H9 M11 1 V3 M11 5 V12" stroke="#fff" stroke-width="1"/></svg>
<svg class="a" style="left:107px;top:699px" width="14" height="17" viewBox="0 0 14 17"><path d="M0.5 0.5 H13.5 V13 L7 16 L0.5 13Z" fill="#111"/><text x="7" y="8.5" font-family="Liberation Sans" font-size="6.5" font-weight="bold" fill="#fff" text-anchor="middle" textLength="10" lengthAdjust="spacingAndGlyphs">EPIC</text><rect x="3" y="10" width="8" height="1" fill="#bbb"/><rect x="6" y="13" width="2" height="1" fill="#ddd"/></svg>
<svg class="a" style="left:139px;top:700px" width="14" height="15" viewBox="0 0 14 15"><circle cx="7" cy="8" r="6" fill="#f56c2d"/><circle cx="7" cy="8" r="2.3" fill="#33465a"/><path d="M7 0 L8.5 2.5 L5.5 2.5Z" fill="#f56c2d"/></svg>
<svg class="a" style="left:171px;top:699px" width="16" height="16" viewBox="0 0 16 16"><circle cx="8" cy="8" r="7.5" fill="#db4437"/><path d="M8 8 L1.5 4.25 A7.5 7.5 0 0 0 8 15.5 Z" fill="#0f9d58"/><path d="M8 8 L8 15.5 A7.5 7.5 0 0 0 14.5 4.25 Z" fill="#f4b400"/><circle cx="8" cy="8" r="3.5" fill="#fff"/><circle cx="8" cy="8" r="2.6" fill="#4285f4"/></svg>
<svg class="a" style="left:204px;top:699px" width="17" height="17" viewBox="0 0 17 17"><circle cx="8" cy="8" r="7.5" fill="#2ca5e0"/><path d="M3.5 7.8 L12 4.5 L10.5 11.5 L8 9.5 L6.5 11 L6.8 8.8 L10.5 5.8 L5.8 8.5Z" fill="#fff"/><rect x="9" y="11" width="8" height="6" rx="1" fill="#7a8590"/></svg>
<svg class="a" style="left:237px;top:699px" width="16" height="16" viewBox="0 0 16 16"><path d="M11.5 0.5 L15.5 2.3 V13.7 L11.5 15.5 L4.8 9.6 L1.8 11.8 L0.5 11.2 V4.8 L1.8 4.2 L4.8 6.4 Z M11.5 4.6 L7.2 8 L11.5 11.4 Z M2.2 6.4 V9.6 L4 8 Z" fill="#9d5fe0" fill-rule="evenodd"/></svg>
<svg class="a" style="left:269px;top:699px" width="16" height="16" viewBox="0 0 16 16"><rect x="0.5" y="0.5" width="15" height="15" rx="3" fill="#7289da"/><path d="M3.5 5 Q8 2.5 12.5 5 L13 10.5 Q11 12 10 11.5 L9.5 10.5 Q8 11 6.5 10.5 L6 11.5 Q5 12 3 10.5Z" fill="#fff"/><circle cx="6.3" cy="8" r="1" fill="#7289da"/><circle cx="9.7" cy="8" r="1" fill="#7289da"/></svg>
<svg class="a" style="left:302px;top:699px" width="16" height="16" viewBox="0 0 16 16"><path d="M0.5 2 H6 L7.5 3.5 H15.5 V14.5 H0.5Z" fill="#f8d775"/><path d="M0.5 5 H15.5 V14.5 H0.5Z" fill="#ffe38a"/><path d="M4.5 14.5 V9 H11.5 V14.5 H9.5 V11 H6.5 V14.5Z" fill="#2ca5e0"/></svg>
<svg class="a" style="left:335px;top:700px" width="15" height="13" viewBox="0 0 15 13"><rect x="0" y="0" width="15" height="13" fill="#68217a"/><rect x="0" y="0" width="15" height="2" fill="#8a4aa0"/><text x="1.5" y="6.5" font-family="Liberation Mono" font-size="4" fill="#fff">C:\</text></svg>
<div class="a" style="left:359px;top:694px;width:32px;height:26px;background:#3d5266"></div>
<svg class="a" style="left:368px;top:701px" width="15" height="12" viewBox="0 0 15 12"><rect x="0" y="0" width="15" height="12" fill="#fff"/><rect x="4" y="2" width="5" height="8" fill="#1a73d0"/><rect x="1.5" y="2" width="1.5" height="8" fill="#bbb"/><rect x="10" y="2.5" width="3.5" height="1" fill="#999"/><rect x="10" y="5" width="3.5" height="1" fill="#999"/><rect x="10" y="7.5" width="3.5" height="1" fill="#999"/></svg>
<div class="a" style="left:133px;top:718px;width:27px;height:2px;background:#a8c8e8"></div>
<div class="a" style="left:166px;top:718px;width:27px;height:2px;background:#a8c8e8"></div>
<div class="a" style="left:199px;top:718px;width:27px;height:2px;background:#a8c8e8"></div>
<div class="a" style="left:231px;top:718px;width:27px;height:2px;background:#a8c8e8"></div>
<div class="a" style="left:297px;top:718px;width:27px;height:2px;background:#a8c8e8"></div>
<div class="a" style="left:329px;top:718px;width:27px;height:2px;background:#a8c8e8"></div>
<div class="a" style="left:359px;top:718px;width:32px;height:2px;background:#a8c8e8"></div>
<!-- tray -->
<svg class="a" style="left:1108px;top:701px" width="12" height="12" viewBox="0 0 12 12"><circle cx="4" cy="6" r="2" fill="none" stroke="#fff" stroke-width="0.9"/><path d="M0.5 11.5 Q4 7.5 7.5 11.5" fill="none" stroke="#fff" stroke-width="0.9"/><circle cx="8" cy="3" r="2" fill="none" stroke="#fff" stroke-width="0.9"/><path d="M6 7 Q8 5 11.5 8" fill="none" stroke="#fff" stroke-width="0.9"/></svg>
<svg class="a" style="left:1133px;top:704px" width="10" height="6" viewBox="0 0 10 6"><path d="M0.5 5.5 L5 1 L9.5 5.5" fill="none" stroke="#fff" stroke-width="1.1"/></svg>
<svg class="a" style="left:1148px;top:702px" width="13" height="10" viewBox="0 0 13 10"><path d="M0.5 3 H2.5 L5.5 0.5 V9.5 L2.5 7 H0.5Z" fill="none" stroke="#fff" stroke-width="0.9"/><path d="M7.5 3 Q8.5 5 7.5 7 M9.5 1.5 Q11 5 9.5 8.5 M11.5 0.5 Q13.5 5 11.5 9.5" fill="none" stroke="#fff" stroke-width="0.9"/></svg>
<svg class="a" style="left:1165px;top:702px" width="12" height="10" viewBox="0 0 12 10"><path d="M1 9.5 Q1 1 10 1 M3 9.5 Q3 3 10 3 M5 9.5 Q5 5 10 5 M7 9.5 Q7 7 10 7" fill="none" stroke="#c8d0d8" stroke-width="0.9"/><circle cx="10" cy="9" r="1" fill="#fff"/></svg>
<div class="t" style="left:1183px;top:702px;color:#fff;font-size:8.5px">РУС</div>
<div class="t" style="left:1207px;top:695px;color:#fff;font-size:8.8px">12:25 AM</div>
<div class="t" style="left:1208px;top:707px;color:#fff;font-size:8.8px">4/6/2020</div>
<svg class="a" style="left:1252px;top:701px" width="12" height="12" viewBox="0 0 12 12"><path d="M0.5 0.5 H11.5 V8.5 H5 L2.5 11 V8.5 H0.5Z" fill="#fff"/><path d="M2.5 3 H9.5 M2.5 5 H9.5" stroke="#33475a" stroke-width="0.8"/></svg>
<div class="a" style="left:1257px;top:705px;width:12px;height:12px;border-radius:50%;background:#1e3a52;border:1px solid #aab"></div>
<div class="t" style="left:1260.5px;top:706px;color:#fff;font-size:8px">6</div>
<div class="a" style="left:1276px;top:694px;width:1px;height:26px;background:#5a6a78"></div>
<!-- CONSOLE WINDOW -->
<div class="a" style="left:143px;top:139px;width:1px;height:340px;background:#2c2c2c"></div>
<div class="a" style="left:144px;top:139px;width:652px;height:340px;background:#000"></div>
<div class="a" style="left:144px;top:139px;width:652px;height:20px;background:#fff"></div>
<svg class="a" style="left:149px;top:145px" width="10" height="8" viewBox="0 0 10 8"><rect width="10" height="8" fill="#5c2d91"/><rect width="10" height="1.2" fill="#9b7bc8"/><text x="1" y="6" font-family="Liberation Sans" font-size="4.2" fill="#fff">C:\</text></svg>
<div class="t" style="left:164px;top:144.5px;color:#6e6e6e;font-size:8.8px;-webkit-text-stroke:0">C:\Users\User\source\repos\MapDraw\x64\Release\MapDraw.exe</div>
<div class="a" style="left:715px;top:149px;width:8px;height:1px;background:#b0b0b0"></div>
<div class="a" style="left:745px;top:144px;width:8px;height:8px;border:1px solid #909090"></div>
<svg class="a" style="left:775px;top:144px" width="9" height="9" viewBox="0 0 9 9"><path d="M0.5 0.5 L8.5 8.5 M8.5 0.5 L0.5 8.5" stroke="#909090" stroke-width="0.9"/></svg>
<div class="a mono" style="left:144px;top:160px;white-space:pre;font-size:8.9px;line-height:12px;color:#c0c0c0">No object layers found...</div>
<div class="a" style="left:144px;top:178px;width:5px;height:2px;background:#e0e0e0"></div>
<div class="a" style="left:784px;top:159px;width:12px;height:320px;background:#f0f0f0"></div>
<svg class="a" style="left:786px;top:163px" width="8" height="5" viewBox="0 0 8 5"><path d="M0.5 4.5 L4 1 L7.5 4.5" fill="none" stroke="#606060" stroke-width="1.2"/></svg>
<div class="a" style="left:785px;top:171px;width:10px;height:11px;background:#c0c0c0"></div>
<!-- SFML WINDOW -->
<div class="a" style="left:431px;top:200px;width:429px;height:342px;background:#000;border:1px solid #2f5f92"></div>
<div class="a" style="left:431px;top:200px;width:429px;height:21px;background:#0063b1"></div>
<svg class="a" style="left:437px;top:206px" width="10" height="8" viewBox="0 0 10 8"><rect width="10" height="8" fill="#e8e8e8"/><rect x="1" y="1" width="3" height="6" fill="#2a7a4a"/><rect x="5" y="1" width="4" height="6" fill="#fff"/></svg>
<div class="t" style="left:451px;top:205px;color:#fff;font-size:8px">A</div>
<div class="a" style="left:778px;top:210px;width:8px;height:1px;background:#fff"></div>
<div class="a" style="left:808px;top:205px;width:9px;height:9px;border:1px solid #fff"></div>
<svg class="a" style="left:839px;top:205px" width="9" height="9" viewBox="0 0 9 9"><path d="M0.5 0.5 L8.5 8.5 M8.5 0.5 L0.5 8.5" stroke="#fff" stroke-width="1"/></svg>

<!-- MAP -->
<svg class="a" style="left:624px;top:364.5px" width="137" height="102.5" viewBox="0 0 137 102.5">
<defs>
<pattern id="tile" x="0" y="0" width="61.3" height="30.7" patternUnits="userSpaceOnUse">
<rect width="61.3" height="30.7" fill="#25878f"/>
<rect x="2.9" y="3.5" width="41.3" height="20.8" fill="#f2d58a"/>
<rect x="2.9" y="12.8" width="41.3" height="2.8" fill="#b8c070"/>
<rect x="2.9" y="13.5" width="41.3" height="1.4" fill="#e8e4b0"/>
<rect x="6.3" y="3.5" width="0.9" height="20.8" fill="#8a9a50"/>
<rect x="12" y="3.5" width="0.8" height="20.8" fill="#a0a868"/>
<rect x="17.2" y="3.5" width="1" height="20.8" fill="#6f8a48"/>
<rect x="21.5" y="3.5" width="0.8" height="20.8" fill="#b0b070"/>
<rect x="7.5" y="6" width="3.8" height="5" fill="none" stroke="#7fae4a" stroke-width="1.1"/>
<rect x="9" y="15.5" width="1.5" height="1.5" fill="#6a8040"/>
<rect x="14" y="17.5" width="1.5" height="1.5" fill="#6a8040"/>
<rect x="24" y="7" width="1.5" height="1.5" fill="#a09050"/>
<rect x="28.5" y="3.5" width="15.7" height="20.8" fill="#a8c060"/>
<ellipse cx="36.4" cy="8" rx="8" ry="4.9" fill="#f2d58a"/>
<ellipse cx="36.4" cy="19" rx="8" ry="5.5" fill="#f2d58a"/>
<ellipse cx="36.4" cy="19" rx="4" ry="3.2" fill="#78b040"/>
<rect x="20.5" y="20.3" width="8.5" height="4" fill="#86b848"/>
<rect x="16.6" y="25.3" width="14.1" height="2.2" fill="#eedc98"/>
<rect x="49" y="2.5" width="7.9" height="19.4" fill="#2f747c"/>
<rect x="49.5" y="3" width="2.3" height="4" fill="#3e5a62"/>
<rect x="54" y="3" width="2.3" height="4" fill="#3e5a62"/>
<rect x="49.5" y="8" width="2.3" height="3" fill="#34484f"/>
<rect x="54" y="8" width="2.3" height="3" fill="#34484f"/>
<rect x="49.5" y="11.3" width="7" height="1.2" fill="#9ab8c0"/>
<rect x="49.5" y="13.5" width="2.3" height="3" fill="#8a9aa0"/>
<rect x="54" y="13.5" width="2.3" height="3" fill="#4a5258"/>
<rect x="50" y="18" width="5.5" height="2.5" fill="#3e5a62"/>
<rect x="47" y="26.3" width="11.7" height="2.4" fill="#4a7a78"/>
<rect x="47.5" y="26.5" width="3" height="2" fill="#d8e8d0"/>
<rect x="52" y="26.5" width="3" height="2" fill="#c8d8c0"/>
</pattern>
</defs>
<rect width="137" height="102.5" fill="url(#tile)"/>
</svg>

</body></html>
